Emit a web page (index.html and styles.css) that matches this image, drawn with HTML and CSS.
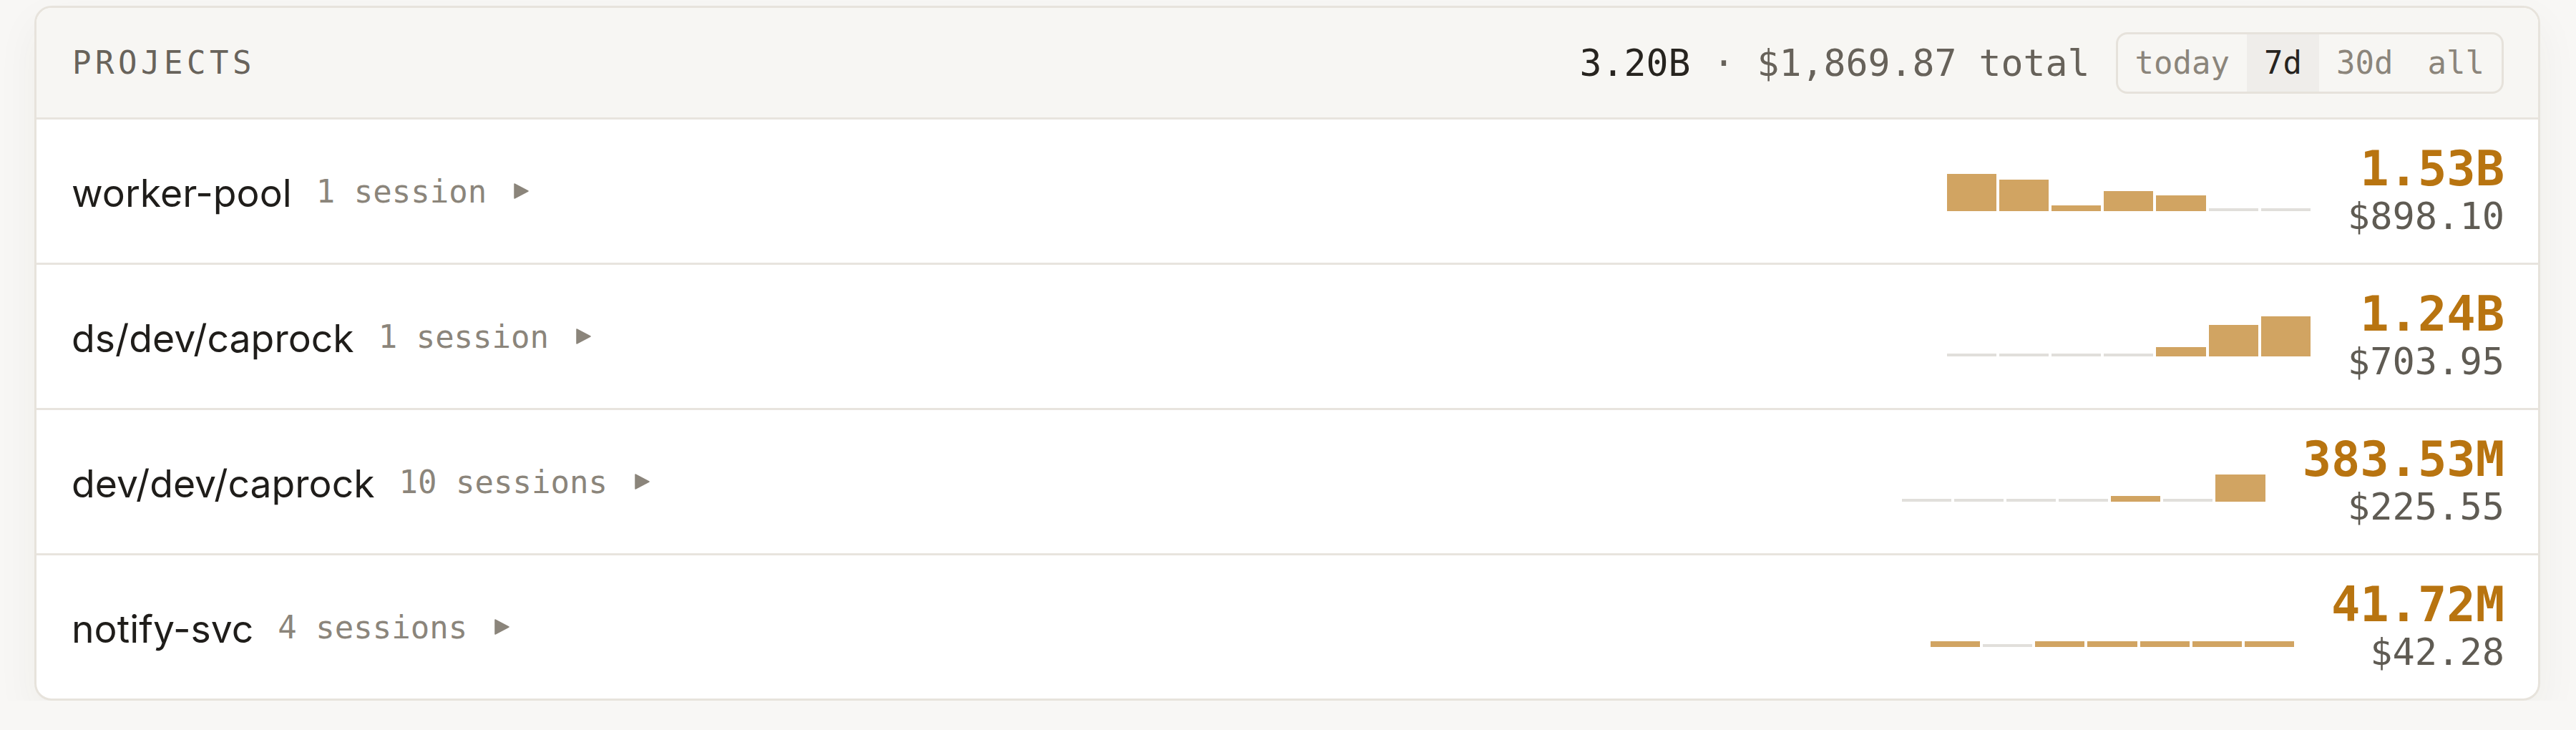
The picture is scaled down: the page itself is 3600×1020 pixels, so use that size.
FILE: index.html
```html
<!DOCTYPE html>
<html lang="en">
<head>
<meta charset="utf-8">
<title>Projects</title>
<link rel="stylesheet" href="styles.css">
</head>
<body>
<div class="card">
  <div class="card-head">
    <div class="title">PROJECTS</div>
    <div class="head-right">
      <div class="totals"><span class="tot-tokens">3.20B</span> · $1,869.87 total</div>
      <div class="seg">
        <span class="seg-btn">today</span>
        <span class="seg-btn on">7d</span>
        <span class="seg-btn">30d</span>
        <span class="seg-btn">all</span>
      </div>
    </div>
  </div>

  <div class="row">
    <div class="row-left">
      <span class="name">worker-pool</span>
      <span class="sess">1 session</span>
      <svg class="caret" viewBox="0 0 22 22" width="22" height="22"><polygon points="2,1 21,11 2,21"/></svg>
    </div>
    <div class="spark">
      <i class="bar" style="height:52px"></i>
      <i class="bar" style="height:44px"></i>
      <i class="bar" style="height:8px"></i>
      <i class="bar" style="height:28px"></i>
      <i class="bar" style="height:22px"></i>
      <i class="bar z"></i>
      <i class="bar z"></i>
    </div>
    <div class="nums"><div class="tok">1.53B</div><div class="cost">$898.10</div></div>
  </div>

  <div class="row">
    <div class="row-left">
      <span class="name">ds/dev/caprock</span>
      <span class="sess">1 session</span>
      <svg class="caret" viewBox="0 0 22 22" width="22" height="22"><polygon points="2,1 21,11 2,21"/></svg>
    </div>
    <div class="spark">
      <i class="bar z"></i>
      <i class="bar z"></i>
      <i class="bar z"></i>
      <i class="bar z"></i>
      <i class="bar" style="height:13px"></i>
      <i class="bar" style="height:44px"></i>
      <i class="bar" style="height:56px"></i>
    </div>
    <div class="nums"><div class="tok">1.24B</div><div class="cost">$703.95</div></div>
  </div>

  <div class="row">
    <div class="row-left">
      <span class="name">dev/dev/caprock</span>
      <span class="sess">10 sessions</span>
      <svg class="caret" viewBox="0 0 22 22" width="22" height="22"><polygon points="2,1 21,11 2,21"/></svg>
    </div>
    <div class="spark">
      <i class="bar z"></i>
      <i class="bar z"></i>
      <i class="bar z"></i>
      <i class="bar z"></i>
      <i class="bar" style="height:8px"></i>
      <i class="bar z"></i>
      <i class="bar" style="height:38px"></i>
    </div>
    <div class="nums"><div class="tok">383.53M</div><div class="cost">$225.55</div></div>
  </div>

  <div class="row">
    <div class="row-left">
      <span class="name">notify-svc</span>
      <span class="sess">4 sessions</span>
      <svg class="caret" viewBox="0 0 22 22" width="22" height="22"><polygon points="2,1 21,11 2,21"/></svg>
    </div>
    <div class="spark">
      <i class="bar" style="height:8px"></i>
      <i class="bar z"></i>
      <i class="bar" style="height:8px"></i>
      <i class="bar" style="height:8px"></i>
      <i class="bar" style="height:8px"></i>
      <i class="bar" style="height:8px"></i>
      <i class="bar" style="height:8px"></i>
    </div>
    <div class="nums"><div class="tok">41.72M</div><div class="cost">$42.28</div></div>
  </div>
</div>
</body>
</html>
```

FILE: styles.css
```css
html, body {
  margin: 0;
  padding: 0;
  background: #f8f7f5;
}
body {
  padding: 8px 50px 0 48px;
  font-family: "DejaVu Sans Mono", "Liberation Mono", monospace;
  color: #27241f;
}
.card {
  border: 3px solid #e7e3dc;
  border-radius: 24px;
  background: #ffffff;
  overflow: hidden;
  box-shadow: 0 24px 60px rgba(60, 50, 30, 0.05);
}
.card-head {
  height: 153px;
  background: #f7f6f3;
  display: flex;
  align-items: center;
  justify-content: space-between;
  padding: 0 48px 0 50px;
}
.title {
  font-size: 44px;
  letter-spacing: 5.5px;
  color: #68635b;
}
.head-right {
  display: flex;
  align-items: center;
  gap: 36px;
}
.totals {
  font-size: 51.5px;
  color: #67625a;
}
.tot-tokens {
  color: #27241f;
}
.seg {
  display: flex;
  border: 3px solid #e6e2db;
  border-radius: 16px;
  overflow: hidden;
  background: #f7f6f3;
}
.seg-btn {
  font-size: 44px;
  line-height: 80px;
  padding: 0 24px;
  color: #8b857b;
}
.seg-btn.on {
  background: #efedea;
  color: #27241f;
}
.row {
  height: 200px;
  border-top: 3px solid #e8e4de;
  display: flex;
  align-items: center;
  padding: 0 47px 0 49px;
}
.row-left {
  flex: 1;
  display: flex;
  align-items: center;
}
.name {
  font-family: Inter, "Open Sans", sans-serif;
  font-size: 53.5px;
  color: #1f1d1a;
  margin-right: 34px;
  position: relative;
  top: 2px;
}
.sess {
  font-size: 44px;
  color: #8b857b;
  margin-right: 37px;
}
.caret {
  fill: #8b857b;
  stroke: #8b857b;
  stroke-width: 1.5;
  stroke-linejoin: round;
}
.spark {
  width: 508px;
  height: 56px;
  display: flex;
  align-items: flex-end;
  gap: 4px;
  margin-right: 52px;
}
.bar {
  flex: 1;
  background: #d1a462;
}
.bar.z {
  height: 4px;
  background: #e1dfdb;
}
.nums {
  text-align: right;
}
.tok {
  font-size: 67px;
  font-weight: bold;
  line-height: 70px;
  color: #b87410;
}
.cost {
  font-size: 52px;
  line-height: 62px;
  color: #5f5b53;
}
```
